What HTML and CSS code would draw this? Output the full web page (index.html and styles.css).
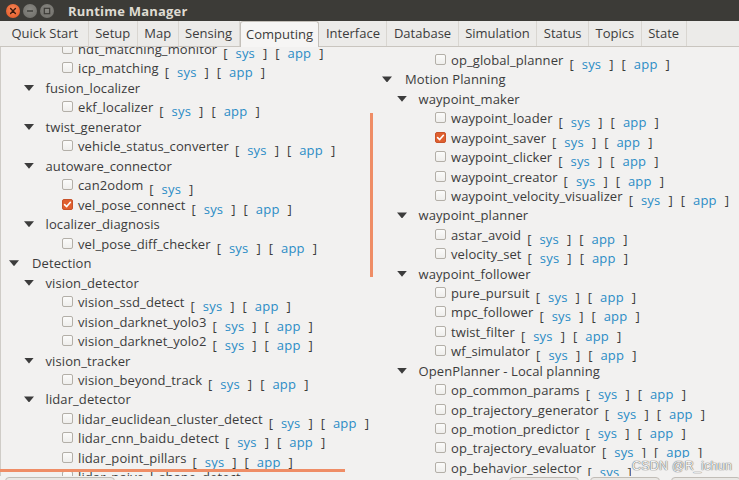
FILE: index.html
```html
<!DOCTYPE html>
<html>
<head>
<meta charset="utf-8">
<link rel="stylesheet" href="styles.css">
</head>
<body>
<div class="window">
  <div class="titlebar">
    <div class="wbtns">
      <span class="wbtn close"><svg width="14" height="14" viewBox="0 0 14 14"><path d="M4.6 4.6 L9.4 9.4 M9.4 4.6 L4.6 9.4" stroke="#3a1a0e" stroke-width="1.4" stroke-linecap="round"/></svg></span>
      <span class="wbtn"><svg width="14" height="14" viewBox="0 0 14 14"><path d="M4 7 H10" stroke="#3c3b37" stroke-width="1.4"/></svg></span>
      <span class="wbtn"><svg width="14" height="14" viewBox="0 0 14 14"><rect x="4.3" y="4.3" width="5.4" height="5.4" fill="none" stroke="#3c3b37" stroke-width="1.2"/></svg></span>
    </div>
    <div class="title">Runtime Manager</div>
  </div>
  <div class="tabs">
    <div class="tab">Quick Start</div>
    <div class="tab">Setup</div>
    <div class="tab">Map</div>
    <div class="tab">Sensing</div>
    <div class="tab active">Computing</div>
    <div class="tab">Interface</div>
    <div class="tab">Database</div>
    <div class="tab">Simulation</div>
    <div class="tab">Status</div>
    <div class="tab">Topics</div>
    <div class="tab">State</div>
  </div>
  <div class="content">
    <div class="panel left">
      <div class="tree tree-left">
        <div class="row leaf"><span class="cb"></span><span class="lbl">ndt_matching_monitor</span><span class="links"><span>[</span><a>sys</a><span>]</span><span>[</span><a>app</a><span>]</span></span></div>
        <div class="row leaf"><span class="cb"></span><span class="lbl">icp_matching</span><span class="links"><span>[</span><a>sys</a><span>]</span><span>[</span><a>app</a><span>]</span></span></div>
        <div class="row l2"><span class="tw"></span><span class="lbl">fusion_localizer</span></div>
        <div class="row leaf"><span class="cb"></span><span class="lbl">ekf_localizer</span><span class="links"><span>[</span><a>sys</a><span>]</span><span>[</span><a>app</a><span>]</span></span></div>
        <div class="row l2"><span class="tw"></span><span class="lbl">twist_generator</span></div>
        <div class="row leaf"><span class="cb"></span><span class="lbl">vehicle_status_converter</span><span class="links"><span>[</span><a>sys</a><span>]</span><span>[</span><a>app</a><span>]</span></span></div>
        <div class="row l2"><span class="tw"></span><span class="lbl">autoware_connector</span></div>
        <div class="row leaf"><span class="cb"></span><span class="lbl">can2odom</span><span class="links"><span>[</span><a>sys</a><span>]</span></span></div>
        <div class="row leaf"><span class="cb on"></span><span class="lbl">vel_pose_connect</span><span class="links"><span>[</span><a>sys</a><span>]</span><span>[</span><a>app</a><span>]</span></span></div>
        <div class="row l2"><span class="tw"></span><span class="lbl">localizer_diagnosis</span></div>
        <div class="row leaf"><span class="cb"></span><span class="lbl">vel_pose_diff_checker</span><span class="links"><span>[</span><a>sys</a><span>]</span><span>[</span><a>app</a><span>]</span></span></div>
        <div class="row l1"><span class="tw"></span><span class="lbl">Detection</span></div>
        <div class="row l2"><span class="tw"></span><span class="lbl">vision_detector</span></div>
        <div class="row leaf"><span class="cb"></span><span class="lbl">vision_ssd_detect</span><span class="links"><span>[</span><a>sys</a><span>]</span><span>[</span><a>app</a><span>]</span></span></div>
        <div class="row leaf"><span class="cb"></span><span class="lbl">vision_darknet_yolo3</span><span class="links"><span>[</span><a>sys</a><span>]</span><span>[</span><a>app</a><span>]</span></span></div>
        <div class="row leaf"><span class="cb"></span><span class="lbl">vision_darknet_yolo2</span><span class="links"><span>[</span><a>sys</a><span>]</span><span>[</span><a>app</a><span>]</span></span></div>
        <div class="row l2"><span class="tw"></span><span class="lbl">vision_tracker</span></div>
        <div class="row leaf"><span class="cb"></span><span class="lbl">vision_beyond_track</span><span class="links"><span>[</span><a>sys</a><span>]</span><span>[</span><a>app</a><span>]</span></span></div>
        <div class="row l2"><span class="tw"></span><span class="lbl">lidar_detector</span></div>
        <div class="row leaf"><span class="cb"></span><span class="lbl">lidar_euclidean_cluster_detect</span><span class="links"><span>[</span><a>sys</a><span>]</span><span>[</span><a>app</a><span>]</span></span></div>
        <div class="row leaf"><span class="cb"></span><span class="lbl">lidar_cnn_baidu_detect</span><span class="links"><span>[</span><a>sys</a><span>]</span><span>[</span><a>app</a><span>]</span></span></div>
        <div class="row leaf"><span class="cb"></span><span class="lbl">lidar_point_pillars</span><span class="links"><span>[</span><a>sys</a><span>]</span><span>[</span><a>app</a><span>]</span></span></div>
        <div class="row leaf"><span class="cb"></span><span class="lbl">lidar_naive_l_shape_detect</span><span class="links"><span>[</span><a>sys</a><span>]</span><span>[</span><a>app</a><span>]</span></span></div>
      </div>
    </div>
    <div class="panel right">
      <div class="tree tree-right">
        <div class="row leaf"><span class="cb"></span><span class="lbl">op_global_planner</span><span class="links"><span>[</span><a>sys</a><span>]</span><span>[</span><a>app</a><span>]</span></span></div>
        <div class="row l1"><span class="tw"></span><span class="lbl">Motion Planning</span></div>
        <div class="row l2"><span class="tw"></span><span class="lbl">waypoint_maker</span></div>
        <div class="row leaf"><span class="cb"></span><span class="lbl">waypoint_loader</span><span class="links"><span>[</span><a>sys</a><span>]</span><span>[</span><a>app</a><span>]</span></span></div>
        <div class="row leaf"><span class="cb on"></span><span class="lbl">waypoint_saver</span><span class="links"><span>[</span><a>sys</a><span>]</span><span>[</span><a>app</a><span>]</span></span></div>
        <div class="row leaf"><span class="cb"></span><span class="lbl">waypoint_clicker</span><span class="links"><span>[</span><a>sys</a><span>]</span><span>[</span><a>app</a><span>]</span></span></div>
        <div class="row leaf"><span class="cb"></span><span class="lbl">waypoint_creator</span><span class="links"><span>[</span><a>sys</a><span>]</span><span>[</span><a>app</a><span>]</span></span></div>
        <div class="row leaf"><span class="cb"></span><span class="lbl">waypoint_velocity_visualizer</span><span class="links"><span>[</span><a>sys</a><span>]</span><span>[</span><a>app</a><span>]</span></span></div>
        <div class="row l2"><span class="tw"></span><span class="lbl">waypoint_planner</span></div>
        <div class="row leaf"><span class="cb"></span><span class="lbl">astar_avoid</span><span class="links"><span>[</span><a>sys</a><span>]</span><span>[</span><a>app</a><span>]</span></span></div>
        <div class="row leaf"><span class="cb"></span><span class="lbl">velocity_set</span><span class="links"><span>[</span><a>sys</a><span>]</span><span>[</span><a>app</a><span>]</span></span></div>
        <div class="row l2"><span class="tw"></span><span class="lbl">waypoint_follower</span></div>
        <div class="row leaf"><span class="cb"></span><span class="lbl">pure_pursuit</span><span class="links"><span>[</span><a>sys</a><span>]</span><span>[</span><a>app</a><span>]</span></span></div>
        <div class="row leaf"><span class="cb"></span><span class="lbl">mpc_follower</span><span class="links"><span>[</span><a>sys</a><span>]</span><span>[</span><a>app</a><span>]</span></span></div>
        <div class="row leaf"><span class="cb"></span><span class="lbl">twist_filter</span><span class="links"><span>[</span><a>sys</a><span>]</span><span>[</span><a>app</a><span>]</span></span></div>
        <div class="row leaf"><span class="cb"></span><span class="lbl">wf_simulator</span><span class="links"><span>[</span><a>sys</a><span>]</span><span>[</span><a>app</a><span>]</span></span></div>
        <div class="row l2"><span class="tw"></span><span class="lbl">OpenPlanner - Local planning</span></div>
        <div class="row leaf"><span class="cb"></span><span class="lbl">op_common_params</span><span class="links"><span>[</span><a>sys</a><span>]</span><span>[</span><a>app</a><span>]</span></span></div>
        <div class="row leaf"><span class="cb"></span><span class="lbl">op_trajectory_generator</span><span class="links"><span>[</span><a>sys</a><span>]</span><span>[</span><a>app</a><span>]</span></span></div>
        <div class="row leaf"><span class="cb"></span><span class="lbl">op_motion_predictor</span><span class="links"><span>[</span><a>sys</a><span>]</span><span>[</span><a>app</a><span>]</span></span></div>
        <div class="row leaf"><span class="cb"></span><span class="lbl">op_trajectory_evaluator</span><span class="links"><span>[</span><a>sys</a><span>]</span><span>[</span><a>app</a><span>]</span></span></div>
        <div class="row leaf"><span class="cb"></span><span class="lbl">op_behavior_selector</span><span class="links"><span>[</span><a>sys</a><span>]</span><span>[</span><a>app</a><span>]</span></span></div>
      </div>
    </div>
  </div>
  <div class="footer">
    <div class="btn btn-wide"></div>
    <div class="btn-group">
      <div class="btn"></div>
      <div class="btn"></div>
      <div class="btn"></div>
    </div>
  </div>
  <div class="mark mark-v"></div>
  <div class="mark mark-h"></div>
  <div class="watermark">CSDN @R_ichun</div>
</div>
</body>
</html>
```
FILE: styles.css
```css
* { box-sizing: border-box; }
html, body { margin: 0; padding: 0; }
body {
  background: #f2f1f0;
  font-family: "Open Sans", "Noto Sans", sans-serif;
  font-size: 13px;
  color: #3c3c3c;
}
.window {
  position: relative;
  width: 739px;
  height: 480px;
  overflow: hidden;
  background: #f2f1f0;
  display: flex;
  flex-direction: column;
}
.titlebar {
  height: 21px;
  flex: 0 0 21px;
  background: #3c3b37;
  display: flex;
  align-items: center;
}
.wbtns {
  display: flex;
  gap: 3px;
  padding-left: 6px;
}
.wbtn {
  width: 14px;
  height: 14px;
  border-radius: 50%;
  background: radial-gradient(circle at 50% 40%, #8a8984, #6c6b66);
  display: block;
}
.wbtn svg { display: block; }
.wbtn.close {
  background: radial-gradient(circle at 50% 40%, #f5885a, #e3531f);
}
.title {
  margin-left: 14px;
  font-weight: bold;
  font-size: 13px;
  color: #dfdbd2;
  letter-spacing: 0.2px;
}
.tabs {
  height: 26px;
  flex: 0 0 26px;
  display: flex;
  padding-left: 2px;
  border-bottom: 1px solid #c9c5bf;
  background: #ecebe9;
}
.tab {
  padding: 0 6.5px;
  line-height: 25px;
  height: 25px;
  border-right: 1px solid #d9d6d1;
  color: #3c3c3c;
  white-space: nowrap;
}
.tab:first-child { padding: 0 9.5px; }
.tab.active {
  background: #f6f5f4;
  border: 1px solid #c4c0ba;
  border-bottom: none;
  border-radius: 3px 3px 0 0;
  height: 26px;
  line-height: 24px;
  padding: 0 5.5px;
}
.content {
  flex: 1 1 auto;
  display: grid;
  grid-template-columns: 372px 1fr;
  overflow: hidden;
  border-left: 1px solid #cfccc7;
}
.panel {
  overflow: hidden;
}
.tree-left { margin-top: -7px; margin-left: -1px; }
.tree-right { margin-top: 4px; }
.row {
  display: flex;
  align-items: flex-start;
  height: 19.48px;
  line-height: 18px;
  white-space: nowrap;
  letter-spacing: 0.1px;
}
.tree-right .row { height: 19.43px; }
.row.l1 { padding-left: 9px; }
.row.l2 { padding-left: 24px; }
.row.leaf { padding-left: 62px; }
.tw {
  width: 10px;
  height: 6px;
  margin-top: 6px;
  flex: 0 0 10px;
  background: #3c3c3c;
  clip-path: polygon(0 0, 100% 0, 50% 100%);
}
.row.l1 .tw { margin-right: 13px; }
.row.l2 .tw { margin-right: 11.5px; }
.cb {
  width: 11px;
  height: 11px;
  flex: 0 0 11px;
  margin-top: 3px;
  margin-right: 5px;
  border: 1px solid #b3afa8;
  border-radius: 2px;
  background: linear-gradient(#fbfbfa, #efeeec);
}
.cb.on {
  border-color: #c8522a;
  background: #e0602f url("data:image/svg+xml;utf8,<svg xmlns='http://www.w3.org/2000/svg' width='9' height='9' viewBox='0 0 9 9'><path d='M1.6 4.6 L3.7 6.6 L7.4 2.3' fill='none' stroke='white' stroke-width='1.6' stroke-linecap='round' stroke-linejoin='round'/></svg>") center/9px 9px no-repeat;
}
.links {
  display: flex;
  gap: 8px;
  margin-left: 6px;
  padding-top: 4px;
  color: #3c3c3c;
  letter-spacing: 0;
}
.links a {
  color: #2a8cc6;
  letter-spacing: 0.2px;
}
.footer {
  flex: 0 0 4px;
  height: 4px;
  display: flex;
  justify-content: space-between;
  padding: 1px 0 0 5px;
  overflow: visible;
}
.btn {
  width: 70px;
  height: 26px;
  border: 1px solid #c1bdb7;
  border-radius: 4px;
  background: #e9e7e4;
}
.btn-wide { width: 110px; }
.btn-group {
  display: flex;
  gap: 11px;
  margin-right: -2px;
}
.mark {
  position: absolute;
  background: #ef8d66;
}
.mark-v {
  left: 370px;
  top: 113px;
  width: 3px;
  height: 164px;
}
.mark-h {
  left: 0;
  top: 469px;
  width: 345px;
  height: 3px;
}
.watermark {
  position: absolute;
  left: 631px;
  top: 458px;
  height: 18px;
  padding: 0 8px 0 1px;
  background: #f2f1f0;
  white-space: nowrap;
  font-family: "Liberation Sans", Arial, sans-serif;
  font-size: 12.5px;
  line-height: 16px;
  color: #f4f4f4;
  text-shadow: 0 0 1px #555, 0 0 1px #666;
  letter-spacing: 0.2px;
}
```
